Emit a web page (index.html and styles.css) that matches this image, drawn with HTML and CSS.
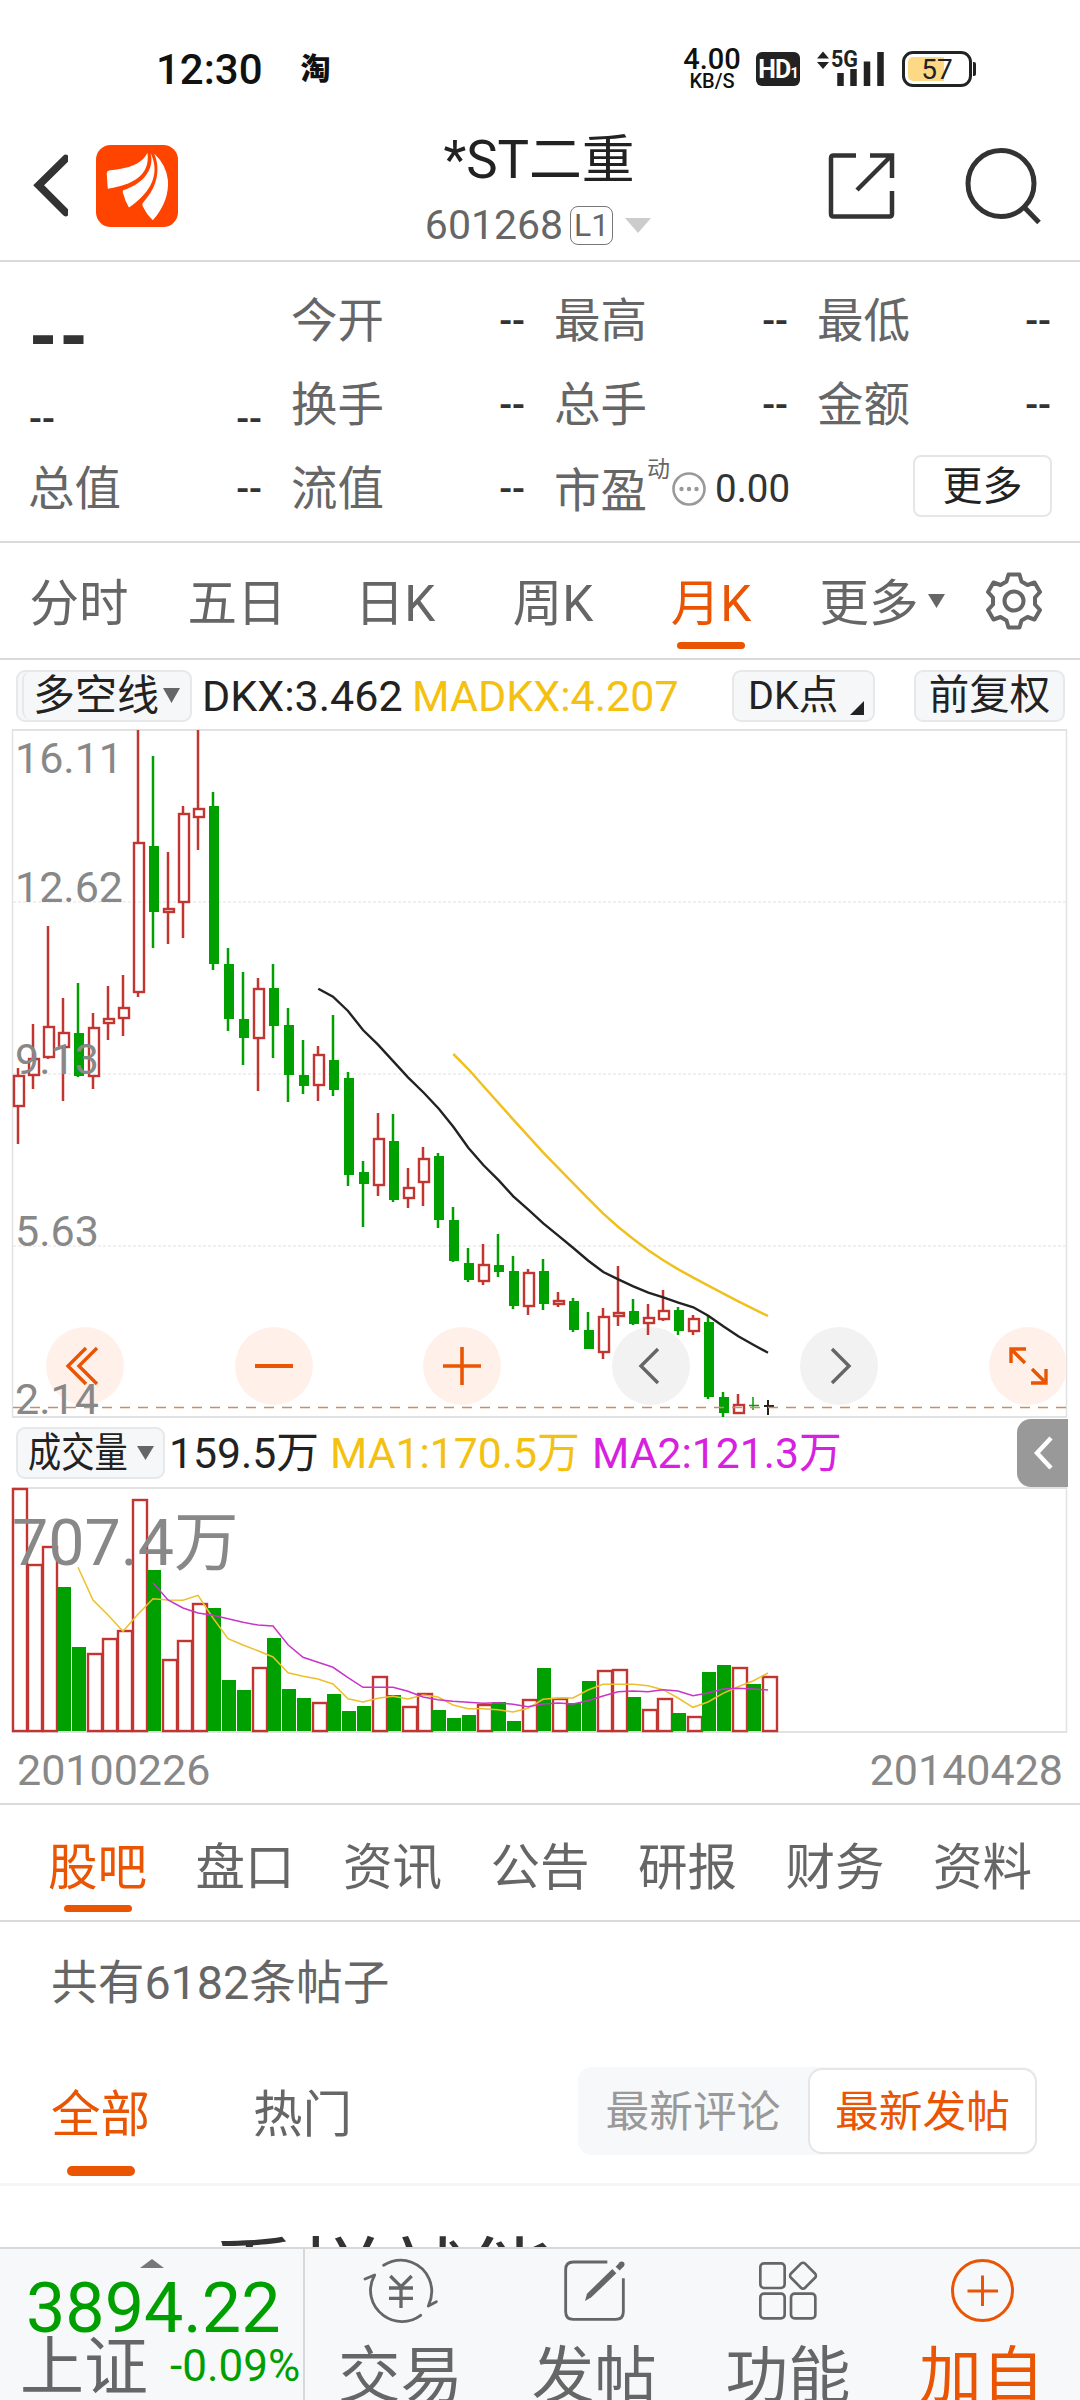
FILE: index.html
```html
<!DOCTYPE html>
<html lang="zh-CN">
<head>
<meta charset="utf-8">
<title>*ST二重 601268</title>
<link rel="stylesheet" href="styles.css">
</head>
<body>
<div class="screen">

<div class="status">
  <span class="clock">12:30</span>
  <span class="tao">淘</span>
  <span class="spacer"></span>
  <span class="net"><b>4.00</b><small>KB/S</small></span>
  <span class="hd">HD<i>1</i></span>
  <svg class="signal" width="70" height="38" viewBox="0 0 70 38">
    <path d="M1 8.500L7 1.500L13 8.500ZM1 12L7 19L13 12Z" fill="#222"/>
    <text x="15" y="17" class="g5" textLength="27" lengthAdjust="spacingAndGlyphs">5G</text>
    <path d="M24.500 23v13M37.500 19v17M51 11.500v24.500M64.500 2v34" stroke="#222" stroke-width="6.500"/>
  </svg>
  <span class="battery"><span class="level"></span><span class="pct">57</span></span><span class="nub"></span>
</div>

<div class="header">
  <svg class="back" width="40" height="66" viewBox="0 0 120 198"><path d="M113 17L32 97L113 178" fill="none" stroke="#333" stroke-width="23" stroke-linejoin="miter" stroke-linecap="round"/></svg>
  <svg class="logo" width="82" height="82" viewBox="229 45 244 244">
    <rect x="229" y="45" width="244" height="244" rx="44" fill="#ff4400"/>
    <path d="M382 68C362 108 318 114 268 121Q261 122 261 130L264 175C335 165 392 135 382 68Z" fill="#fff"/>
    <path d="M391 68C405 118 368 160 312 179Q306 182 310 190Q316 213 327 231C380 195 426 140 391 68Z" fill="#fff"/>
    <path d="M402 70C420 110 416 165 370 215Q364 221 370 231Q380 253 398 269C432 231 446 190 443 150Q439 105 402 70Z" fill="#fff"/>
  </svg>
  <div class="title"><h1>*ST二重</h1>
    <div class="code">601268<span class="l1">L1</span><svg width="26" height="15" viewBox="0 0 26 15"><path d="M0 0H26L13 15Z" fill="#ccc"/></svg></div>
  </div>
  <svg class="share" width="68" height="68" viewBox="0 0 68 68" fill="none" stroke="#333" stroke-width="4.500"><path d="M28 3.500H5.500Q3 3.500 3 6V62Q3 64.500 5.500 64.500H61.500Q64 64.500 64 62V39M42 3.500H64V26M63 4L29 38"/></svg>
  <svg class="search" width="80" height="80" viewBox="0 0 80 80" fill="none" stroke="#333" stroke-width="5"><circle cx="38" cy="37.500" r="33"/><path d="M62 62L76 76.500"/></svg>
</div>

<div class="quote">
  <div class="cell big"><b>--</b></div>
  <div class="cell"><span>今开</span><em>--</em></div>
  <div class="cell"><span>最高</span><em>--</em></div>
  <div class="cell"><span>最低</span><em>--</em></div>
  <div class="cell low"><em>--</em><em>--</em></div>
  <div class="cell"><span>换手</span><em>--</em></div>
  <div class="cell"><span>总手</span><em>--</em></div>
  <div class="cell"><span>金额</span><em>--</em></div>
  <div class="cell"><span>总值</span><em>--</em></div>
  <div class="cell"><span>流值</span><em>--</em></div>
  <div class="cell pe"><span>市盈<sup>动</sup></span><svg width="36" height="36" viewBox="0 0 36 36"><circle cx="18" cy="18" r="15.500" fill="none" stroke="#999" stroke-width="2.600"/><g fill="#999"><circle cx="10.500" cy="18" r="2.200"/><circle cx="18" cy="18" r="2.200"/><circle cx="25.500" cy="18" r="2.200"/></g></svg><em>0.00</em></div>
  <div class="cell end"><span class="more">更多</span></div>
</div>

<div class="periods">
  <span>分时</span><span>五日</span><span>日K</span><span>周K</span><span class="on">月K</span><span class="drop">更多<svg width="17" height="14" viewBox="0 0 17 14"><path d="M0 0H17L8.500 14Z" fill="#666"/></svg></span>
  <svg class="gear" width="60" height="60" viewBox="-30 -30 60 60" fill="none" stroke="#666" stroke-width="4"><circle r="9.500"/><path stroke-linejoin="round" d="M-5.500 -26.500H5.500L7.500 -19.500L13.500 -16L20.500 -18.500L26 -9L21 -3.500V3.500L26 9L20.500 18.500L13.500 16L7.500 19.500L5.500 26.500H-5.500L-7.500 19.500L-13.500 16L-20.500 18.500L-26 9L-21 3.500V-3.500L-26 -9L-20.500 -18.500L-13.500 -16L-7.500 -19.500Z"/></svg>
</div>

<div class="indicator">
  <span class="chip dkx">多空线<svg width="17" height="15" viewBox="0 0 17 15"><path d="M0 0H17L8.500 15Z" fill="#666"/></svg></span>
  <span class="val v1">DKX:3.462</span>
  <span class="val v2 gold">MADKX:4.207</span>
  <span class="chip dkp">DK点<svg width="14" height="14" viewBox="0 0 14 14"><path d="M14 0V14H0Z" fill="#222"/></svg></span>
  <span class="chip fq">前复权</span>
</div>

<svg class="chart" id="kline" width="1080" height="690" viewBox="0 729 1080 690"></svg>

<div class="volbar">
  <span class="chip vol"><span class="narrow">成交量</span><svg width="17" height="14" viewBox="0 0 17 14"><path d="M0 0H17L8.500 14Z" fill="#666"/></svg></span>
  <span class="val w1">159.5万</span>
  <span class="val w2 gold">MA1:170.5万</span>
  <span class="val w3 pink">MA2:121.3万</span>
  <span class="fold"><svg width="20" height="34" viewBox="0 0 20 34"><path d="M17 2L3 17L17 32" fill="none" stroke="#fff" stroke-width="4.500"/></svg></span>
</div>

<svg class="chart" id="volume" width="1080" height="247" viewBox="0 1487 1080 247"></svg>

<div class="dates"><span>20100226</span><span>20140428</span></div>

<div class="sections">
  <span class="on">股吧</span><span>盘口</span><span>资讯</span><span>公告</span><span>研报</span><span>财务</span><span>资料</span>
</div>

<div class="count">共有6182条帖子</div>

<div class="filter">
  <span class="on">全部</span><span class="hot">热门</span>
  <div class="seg"><span>最新评论</span><span class="sel">最新发帖</span></div>
</div>

<div class="feed"><p>看样就能</p></div>

<div class="bottom">
  <div class="index">
    <svg width="26" height="9" viewBox="0 0 26 9"><path d="M13 0L25 9H1Z" fill="#777"/></svg>
    <strong>3894.22</strong>
    <div><span>上证</span><em>-0.09%</em></div>
  </div>
  <div class="act">
    <svg width="80" height="70" viewBox="60 50 240 210" fill="none" stroke="#666" stroke-width="8.500" stroke-linecap="round" stroke-linejoin="round"><path d="M131 78C190 42 250 75 268 120Q284 160 265 200L289 187M75 119L104 107C80 150 92 200 130 228C165 254 210 252 242 228"/><path stroke-width="10" stroke-linecap="butt" d="M151 110L183 142L215 110M183 140V206M147 146H219M147 177H219"/></svg>
    <span>交易</span>
  </div>
  <div class="act">
    <svg width="80" height="70" viewBox="642 50 240 210" fill="none" stroke="#666" stroke-width="8.500"><path d="M802 68H700Q677 68 677 91V217Q677 240 700 240H827Q850 240 850 217V117"/><path d="M735 185L741 163L817 89L829 102L754 174Z" fill="#666" stroke="none"/><path d="M833 88L845 75" stroke-width="17"/><circle cx="845" cy="75" r="8.500" fill="#666" stroke="none"/></svg>
    <span>发帖</span>
  </div>
  <div class="act">
    <svg width="80" height="70" viewBox="1226 50 240 210" fill="none" stroke="#666" stroke-width="8"><rect x="1263" y="72" width="73" height="74" rx="11"/><rect x="1263" y="163" width="73" height="74" rx="11"/><rect x="1355" y="163" width="73" height="74" rx="11"/><rect x="1361" y="79" width="60" height="60" rx="9" transform="rotate(45 1391 109)"/></svg>
    <span>功能</span>
  </div>
  <div class="act add">
    <svg width="80" height="70" viewBox="0 0 80 70" fill="none" stroke="#ea5504" stroke-width="3"><circle cx="40.500" cy="34.500" r="30"/><path d="M40.500 19.500V50M25.500 35H56"/></svg>
    <span>加自</span>
  </div>
</div>

</div>
<script src="chart.js"></script>
</body>
</html>
```
FILE: styles.css
```css
* { box-sizing: border-box; }
body { margin: 0; background: #fff; }
.screen {
  width: 1080px; height: 2400px; overflow: hidden; position: relative;
  font-family: Roboto, "Noto Sans CJK SC", sans-serif; color: #666;
}
svg { display: block; flex: none; }
em, i { font-style: normal; }
span, em, b { white-space: nowrap; }

/* status bar */
.status { height: 108px; padding: 30px 104px 0 156px; display: flex; align-items: center; color: #111; }
.clock { font-size: 42px; font-weight: 500; }
.tao { font-size: 30px; font-weight: 900; margin-left: 38px; line-height: 40px; }
.spacer { flex: 1; }
.net { display: flex; flex-direction: column; align-items: center; width: 60px; padding-top: 1px; }
.net b { font-size: 29px; font-weight: 500; line-height: 24px; }
.net small { font-size: 20px; font-weight: 500; line-height: 21px; }
.hd { width: 44px; height: 34px; border-radius: 6px; background: #222; color: #fff; margin-left: 14px; font-size: 25px; font-weight: 700; line-height: 35px; text-align: center; letter-spacing: -1px; }
.hd i { font-size: 15px; }
.signal { margin-left: 16px; }
.g5 { font: 700 24px Roboto, sans-serif; fill: #222; }
.battery { width: 70px; height: 36px; border: 3px solid #222; border-radius: 11px; margin-left: 16px; padding: 3px; display: grid; }
.level { grid-area: 1 / 1; width: 36px; height: 24px; background: #fdd985; border-radius: 5px 0 0 5px; }
.pct { grid-area: 1 / 1; text-align: center; font-size: 28px; line-height: 25px; color: #222; }
.nub { width: 3px; height: 14px; background: #222; border-radius: 0 2px 2px 0; margin-left: 1px; }

/* title bar */
.header { height: 154px; border-bottom: 2px solid #dadada; display: flex; align-items: flex-start; }
.back { margin: 45px 0 0 28px; }
.logo { margin: 37px 0 0 28px; }
.title { margin-left: 179px; width: 364px; text-align: center; }
h1 { margin: 20px 0 0; font-size: 52.8px; font-weight: 400; line-height: 64px; color: #222; }
.code { display: flex; align-items: center; justify-content: center; font-size: 41px; line-height: 56px; margin: 5px 0 0 -2px; }
.l1 { border: 1.5px solid #777; border-radius: 8px; width: 43px; height: 39px; font-size: 32px; line-height: 37px; text-align: center; margin: 0 12px 0 7px; }
.share { margin: 44px 0 0 107px; }
.search { margin: 38px 0 0 67px; }

/* quote summary */
.quote { height: 281px; border-bottom: 2px solid #dadada; padding: 17px 29px 0; display: grid; grid-template-columns: repeat(4, 233px); grid-auto-rows: 84px; column-gap: 30px; font-size: 46.5px; line-height: 60px; }
.cell { display: flex; align-items: center; justify-content: space-between; }
.cell span { margin-left: -1px; }
.cell em { color: #333; font-size: 38px; font-weight: 500; }
.big b { font-size: 68px; font-weight: 900; color: #333; padding-top: 33px; margin-left: -1px; }
.low em { padding-top: 28px; }
.cell.pe { justify-content: flex-start; }
.pe sup { font-size: 23px; line-height: 24px; vertical-align: 30px; }
.pe svg { margin-left: 1px; }
.pe em { font-size: 38.5px; font-weight: 400; margin-left: 8px; }
.cell.end { justify-content: flex-end; margin-right: -1px; }
.cell .more { margin-top: -7px; width: 139px; height: 62px; border: 2px solid #e6e6e6; border-radius: 8px; text-align: center; font-size: 40px; line-height: 59px; color: #222; }

/* period tabs */
.periods { height: 117px; border-bottom: 2px solid #dadada; display: flex; align-items: center; font-size: 49.5px; line-height: 64px; }
.periods span { width: 158px; text-align: center; padding-top: 6px; }
.on { color: #ea5504; position: relative; }
.on::after { content: ""; position: absolute; left: 50%; margin-left: -34px; width: 68px; height: 7px; border-radius: 4px; background: #ea5504; }
.periods .on::after { top: 76px; }
.drop { display: flex; align-items: center; justify-content: center; gap: 9px; margin-right: 9px; }
.drop svg { margin: -5px -26px 0 0; }
.gear { margin-left: 27px; }

/* indicator rows */
.indicator { height: 69px; display: flex; align-items: center; padding: 2px 15px 0 16px; }
.chip { background: #f6f7f9; border: 2px solid #e6e8ea; border-radius: 9px; color: #222; height: 52px; line-height: 47px; font-size: 41px; display: flex; align-items: center; flex: none; }
.dkx { width: 176px; padding-left: 15px; gap: 4px; font-size: 42px; position: relative; }
.dkx::before { content: ""; position: absolute; left: 4px; top: -1px; width: 14px; height: 49px; border-left: 2px solid #e6e8ea; border-radius: 9px 0 0 9px; }
.val { font-size: 43px; line-height: 56px; color: #222; flex: none; }
.v1 { margin-left: 10px; width: 210px; }
.v2 { width: 320px; }
.gold { color: #f4c112; }
.pink { color: #d622de; }
.dkp { width: 143px; padding-left: 14px; font-size: 39.5px; gap: 12px; }
.dkp svg { margin-top: 24px; }
.fq { width: 151px; justify-content: center; margin-left: 39px; font-size: 40.5px; }

.volbar { height: 68px; display: flex; align-items: center; padding-left: 16px; }
.vol { width: 149px; padding-left: 10px; }
.narrow { font-size: 41px; width: 98px; transform: scaleX(.81); transform-origin: 0 50%; margin-right: 11px; }
.volbar .val { font-size: 42.7px; }
.w1 { margin-left: 4px; width: 161px; }
.w2 { width: 262px; }
.w3 { width: 425px; }
.fold { width: 51px; height: 68px; background: #999; border-radius: 14px 0 0 14px; display: flex; align-items: center; padding-left: 17px; }

.chart text { font-family: Roboto, "Noto Sans CJK SC", sans-serif; fill: #888; font-size: 43px; }
.dates { height: 69px; display: flex; justify-content: space-between; padding: 8px 17px 0 17px; font-size: 43px; line-height: 56px; color: #888; }

/* content tabs */
.sections { height: 119px; border-top: 2px solid #dadada; border-bottom: 2px solid #dadada; display: flex; justify-content: space-between; align-items: center; padding: 10px 48px 0 48px; font-size: 49.5px; line-height: 64px; }
.sections .on::after { top: 69px; }
.count { height: 123px; padding-left: 51px; font-size: 46.7px; line-height: 122px; }
.filter { height: 141px; border-bottom: 3px solid #f5f5f6; display: flex; align-items: center; padding: 1px 43px 0 51px; font-size: 49.5px; line-height: 64px; }
.filter .on::after { top: 83px; height: 10px; border-radius: 5px; }
.hot { margin-left: 103px; }
.seg { margin: -7px 0 0 auto; width: 459px; height: 88px; border-radius: 14px; background: #f7f8fa; display: flex; align-items: center; font-size: 43.7px; color: #999; }
.seg span { flex: none; width: 230px; text-align: center; padding-top: 2px; }
.seg .sel { width: 229px; height: 86px; line-height: 80px; background: #fff; border: 2px solid #e6e6e6; border-radius: 14px; color: #ea5504; }
.feed { height: 61px; overflow: hidden; }
.feed p { margin: 34px 0 0 211px; font-size: 86px; line-height: 120px; color: #333; }

/* bottom bar */
.bottom { height: 154px; background: #f7f8fa; border-top: 2px solid #d8d8d8; display: flex; overflow: hidden; }
.index { width: 305px; border-right: 2px solid #d8d8d8; flex: none; color: #009f00; }
.index svg { margin: 10px 0 0 139px; }
.index strong { display: block; font-weight: 400; font-size: 70px; line-height: 80px; margin: 0 0 0 26px; }
.index div { display: flex; align-items: center; margin: -20px 0 0 20px; }
.index div span { font-size: 64px; line-height: 80px; color: #666; }
.index em { font-size: 44px; margin: -4px 0 0 22px; }
.act { flex: 1; display: flex; flex-direction: column; align-items: center; font-size: 62.5px; line-height: 80px; padding: 7px 3px 0 0; }
.act span { margin-top: 11px; }
.add { color: #ea5504; }
```
FILE: chart.js
```js
const RED = '#c23531', GREEN = '#00a000';
const STEP = 15, FIRST = 18;
const cx = i => FIRST + STEP * i;

// [up, high, bodyTop, bodyBottom, low] per month
const candles = [
  [1,1068,1076,1106,1144],[1,1024,1059,1075,1089],[1,926,1027,1057,1059],[1,998,1033,1047,1101],
  [0,983,1033,1076,1077],[1,1013,1028,1076,1089],[1,986,1019,1023,1040],[1,975,1008,1018,1036],
  [1,730,843,992,997],[0,756,846,912,948],[1,852,909,912,944],[1,806,814,902,938],
  [1,730,809,817,850],[0,792,806,964,970],[0,948,964,1019,1031],[0,972,1019,1038,1065],
  [1,978,989,1038,1091],[0,964,988,1026,1058],[0,1008,1025,1075,1102],[0,1040,1075,1086,1094],
  [1,1046,1055,1085,1101],[0,1015,1060,1090,1096],[0,1072,1078,1175,1186],[0,1161,1172,1184,1227],
  [1,1113,1139,1185,1196],[0,1114,1141,1200,1202],[1,1168,1188,1198,1208],[1,1147,1159,1182,1206],
  [0,1153,1156,1220,1228],[0,1207,1220,1261,1262],[0,1248,1263,1280,1282],[1,1244,1265,1281,1285],
  [0,1234,1265,1272,1277],[0,1256,1271,1306,1309],[1,1269,1273,1306,1315],[0,1259,1271,1304,1310],
  [1,1292,1301,1304,1307],[0,1298,1301,1330,1332],[0,1312,1330,1349,1349],[1,1308,1317,1352,1359],
  [1,1266,1313,1316,1326],[0,1299,1311,1324,1325],[1,1304,1318,1323,1335],[1,1290,1311,1319,1321],
  [0,1307,1310,1331,1335],[1,1315,1319,1331,1335],[0,1315,1322,1397,1399],[0,1392,1397,1413,1417],
  [1,1394,1405,1413,1414]
];

const dkx = [[55,86],[99,110],[144,153],[189,210],[234,254],[324,352],[372,399],[417,447],[460,500],[505,563],[550,615],[597,662],[640,709],[685,749],[730,790],[775,827],[820,864],[865,902],[910,936],[955,958],[1000,979],[1045,998],[1090,1012],[1135,1028],[1180,1042],[1225,1067],[1270,1099],[1315,1129],[1360,1154],[1404,1178]];
const madkx = [[460,282],[505,327],[550,378],[640,479],[730,578],[820,670],[865,716],[910,761],[955,801],[1000,837],[1045,871],[1090,901],[1135,928],[1180,953],[1225,977],[1315,1024],[1404,1068]];
const scaled = pts => pts.map(p => (300 + p[0] / 3).toFixed(1) + ',' + (960 + p[1] / 3).toFixed(1)).join(' ');

function button(x, fill, stroke, d, w) {
  return `<circle cx="${x}" cy="1366" r="39" fill="${fill}"/><path transform="translate(${x} 1366)" d="${d}" fill="none" stroke="${stroke}" stroke-width="${w || 3.4}"/>`;
}

let k = '';
for (const y of [902, 1074, 1246]) k += `<path d="M13 ${y}H1066" stroke="#ececec" stroke-width="1.500" stroke-dasharray="3 2"/>`;
k += `<path d="M12.500 730V1417M1066.500 730V1417" stroke="#e2e2e2" stroke-width="1.500"/><path d="M12 730H1067M12 1417H1067" stroke="#e2e2e2" stroke-width="2"/>`;
const WARM = '#fff1ea', COOL = '#f2f2f2', ORANGE = '#ea5504';
k += button(85, WARM, ORANGE, 'M1 -18L-17 0L1 18M12 -18L-6 0L12 18');
k += button(274, WARM, ORANGE, 'M-19 0H19', 4);
k += button(462, WARM, ORANGE, 'M-19 0H19M0 -19V19', 3.6);
k += button(651, COOL, '#666', 'M7 -17L-10 0L7 17');
k += button(839, COOL, '#666', 'M-7 -17L10 0L-7 17');
k += `<clipPath id="edge"><rect x="0" y="1300" width="1066" height="117"/></clipPath><g clip-path="url(#edge)">` + button(1028, WARM, ORANGE, 'M-17 -3V-17H-2M-17 -17L-3 -3M18 3V17H3M18 17L4 3') + '</g>';
candles.forEach(([up, hi, top, bot, lo], i) => {
  const x = cx(i), c = up ? RED : GREEN;
  if (up) {
    k += `<path d="M${x} ${hi}V${top}M${x} ${bot}V${lo}" stroke="${c}" stroke-width="2.500"/><rect x="${x - 4}" y="${top}" width="10" height="${bot - top}" fill="none" stroke="${c}" stroke-width="2.400"/>`;
  } else {
    k += `<path d="M${x} ${hi}V${lo}" stroke="${c}" stroke-width="2.500"/><rect x="${x - 4}" y="${top}" width="10" height="${bot - top}" fill="${c}"/>`;
  }
});
k += `<path d="M753 1397V1410M749 1405.500H759" stroke="${GREEN}" stroke-width="1.500"/><path d="M768 1400V1415M764 1406H774" stroke="#222" stroke-width="2"/>`;
k += `<path d="M13 1407.500H1066" stroke="#d08a64" stroke-width="1.500" stroke-dasharray="10 8" stroke-dashoffset="1"/>`;
k += `<polyline points="${scaled(dkx)}" fill="none" stroke="#222" stroke-width="2.400"/><polyline points="${scaled(madkx)}" fill="none" stroke="#f0c020" stroke-width="2.500"/>`;
[['16.11', 773], ['12.62', 902], ['9.13', 1073.5], ['5.63', 1245.5], ['2.14', 1413.5]].forEach(([t, y]) => {
  k += `<text x="15" y="${y}">${t}</text>`;
});
document.getElementById('kline').innerHTML = k;

// [up, top] of each monthly volume bar
const volumes = [
  [1,1489],[1,1565],[1,1547],[0,1587],[0,1647],[1,1654],[1,1639],[1,1631],[1,1500],[0,1570],[1,1660],[1,1641],
  [1,1604],[0,1608],[0,1680],[0,1690],[1,1668],[0,1638],[0,1689],[0,1698],[1,1703],[0,1694],[0,1711],[0,1706],
  [1,1677],[0,1695],[1,1707],[1,1694],[0,1710],[0,1718],[0,1715],[1,1705],[0,1702],[0,1721],[1,1700],[0,1668],
  [1,1699],[0,1703],[0,1681],[1,1671],[1,1670],[0,1697],[1,1710],[1,1699],[0,1713],[1,1717],[0,1672],[0,1665],
  [1,1668],[0,1684],[1,1677]
];
const ma1 = [262,360,405,454,403,356,360,361,346,414,476,495,512,531,578,589,597,612,656,666,655,649,657,645,651,675,686,686,689,696,685,658,654,654,630,613,613,613,617,629,654,682,666,640,620,603,579];
const ma2 = [308,360,384,399,406,416,427,435,438,494,532,547,562,593,622,622,622,634,651,659,664,667,670,668,673,680,672,669,672,662,648,635,633,635,629,633,647,639,627,625,627,630];
const line = (vals, start) => vals.map((v, i) => cx(start + i) + ',' + (1480 + v / 3).toFixed(1)).join(' ');

let v = `<path d="M12 1488H1067M12 1732H1067" stroke="#e2e2e2" stroke-width="2"/><path d="M12.500 1488V1732M1066.500 1488V1732" stroke="#e2e2e2" stroke-width="1.500"/>`;
volumes.forEach(([up, top], i) => {
  const x = cx(i) - 6;
  v += up
    ? `<rect x="${x + 1}" y="${top}" width="14" height="${1731 - top}" fill="#fff" stroke="${RED}" stroke-width="2.400"/>`
    : `<rect x="${x}" y="${top}" width="14" height="${1731 - top}" fill="${GREEN}"/>`;
});
v += `<polyline points="${line(ma1, 4)}" fill="none" stroke="#ecc02c" stroke-width="1.500"/><polyline points="${line(ma2, 9)}" fill="none" stroke="#c934c9" stroke-width="1.500"/>`;
v += `<text x="12" y="1565" style="font-size:64.500px">707.4万</text>`;
document.getElementById('volume').innerHTML = v;
```
